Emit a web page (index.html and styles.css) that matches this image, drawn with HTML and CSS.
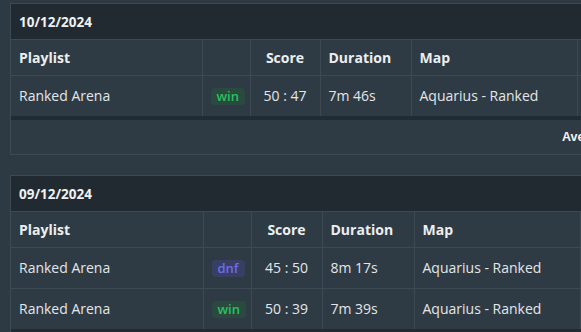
FILE: index.html
```html
<!DOCTYPE html>
<html lang="en">
<head>
<meta charset="utf-8">
<title>Match history</title>
<link rel="stylesheet" href="styles.css">
</head>
<body>
<main class="history">
  <section class="day">
    <header class="day-head">10/12/2024</header>
    <table class="games">
      <colgroup>
        <col class="w-playlist"><col class="w-result"><col class="w-score"><col class="w-duration"><col class="w-map"><col class="w-rest">
      </colgroup>
      <thead>
        <tr><th>Playlist</th><th></th><th class="center">Score</th><th>Duration</th><th>Map</th><th></th></tr>
      </thead>
      <tbody>
        <tr><td>Ranked Arena</td><td class="center"><span class="badge win">win</span></td><td class="center">50 : 47</td><td>7m 46s</td><td>Aquarius - Ranked</td><td></td></tr>
      </tbody>
    </table>
    <footer class="day-foot"><span class="avg">Average</span></footer>
  </section>

  <section class="day">
    <header class="day-head">09/12/2024</header>
    <table class="games">
      <colgroup>
        <col class="w-playlist2"><col class="w-result"><col class="w-score2"><col class="w-duration2"><col class="w-map"><col class="w-rest">
      </colgroup>
      <thead>
        <tr><th>Playlist</th><th></th><th class="center">Score</th><th>Duration</th><th>Map</th><th></th></tr>
      </thead>
      <tbody>
        <tr><td>Ranked Arena</td><td class="center"><span class="badge dnf">dnf</span></td><td class="center">45 : 50</td><td>8m 17s</td><td>Aquarius - Ranked</td><td></td></tr>
        <tr><td>Ranked Arena</td><td class="center"><span class="badge win">win</span></td><td class="center">50 : 39</td><td>7m 39s</td><td>Aquarius - Ranked</td><td></td></tr>
      </tbody>
    </table>
  </section>
</main>
</body>
</html>
```
FILE: styles.css
```css
html, body {
  margin: 0;
  padding: 0;
  background: #2e3a43;
  overflow: hidden;
}
body {
  font-family: "Open Sans", "Liberation Sans", sans-serif;
  color: #e3e6e9;
  width: 581px;
  height: 332px;
}
.history {
  padding: 3px 0 0 10px;
  display: flex;
  flex-direction: column;
  gap: 20px;
}
.day {
  width: 760px;
  border: 1px solid #3d4a54;
  background: #2f3b44;
}
.day-head {
  height: 35px;
  display: flex;
  align-items: center;
  padding-left: 8px;
  background: #212a31;
  border-bottom: 1px solid #3d4a54;
  font-weight: 700;
  font-size: 13.5px;
  color: #eef0f2;
}
.games {
  width: 100%;
  border-collapse: collapse;
  table-layout: fixed;
  font-size: 14px;
}
.w-playlist { width: 191px; }
.w-playlist2 { width: 192px; }
.w-result { width: 48px; }
.w-score { width: 70px; }
.w-score2 { width: 71px; }
.w-duration { width: 91px; }
.w-duration2 { width: 92px; }
.w-map { width: 166px; }
.games th, .games td {
  text-align: left;
  padding: 0 8px;
  border-right: 1px solid #3d4a54;
  border-bottom: 1px solid #3d4a54;
  white-space: nowrap;
}
.games th {
  height: 35px;
  font-weight: 700;
  color: #eceef0;
}
.games td {
  height: 39px;
  padding-bottom: 1px;
}
.games .center { text-align: center; }
.games tbody tr:last-child td {
  border-bottom: 4px solid #222b32;
}
.badge {
  display: inline-block;
  padding: 2px 6px 2px;
  border-radius: 4px;
  font-size: 13px;
  font-weight: 600;
  line-height: 13px;
}
.badge.win {
  color: #27c25f;
  background: #2a4a3f;
}
.badge.dnf {
  color: #6b6cf0;
  background: #393f62;
}
.day-foot {
  height: 34px;
  display: flex;
  align-items: center;
  padding-left: 551px;
  font-family: "Liberation Sans", Arial, sans-serif;
  font-weight: 700;
  font-size: 12.5px;
  color: #f2f4f5;
}
```
